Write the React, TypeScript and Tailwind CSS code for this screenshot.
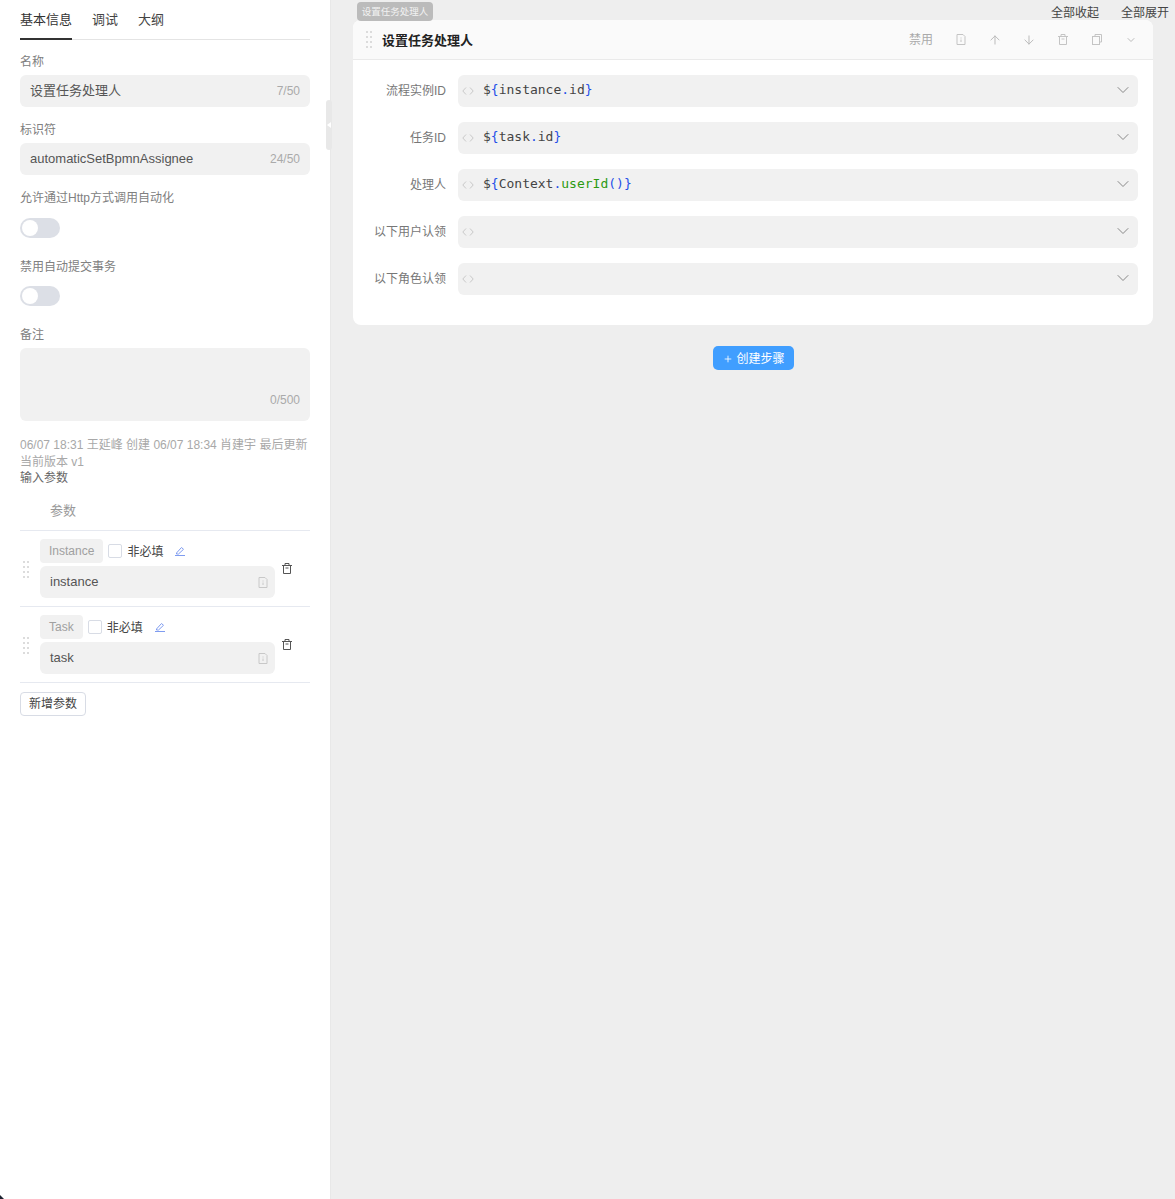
import React from 'react'
import { ChevronDown, ArrowUp, ArrowDown, Plus } from 'lucide-react'

const font = { fontFamily: '"Liberation Sans", "Noto Sans CJK SC", sans-serif' }

const DragDots = () => (
  <svg width="6" height="17" viewBox="0 0 6 17" fill="#dcdcdc" className="shrink-0">
    {[0, 5, 10, 15].map(y => (
      <g key={y}>
        <rect x="0" y={y} width="2" height="2" />
        <rect x="4" y={y} width="2" height="2" />
      </g>
    ))}
  </svg>
)

const FileIcon = ({ color = '#c8c8c8' }: { color?: string }) => (
  <svg width="10" height="11" viewBox="0 0 10 11" fill="none" stroke={color} strokeWidth="1" className="shrink-0">
    <path d="M1 .5h6l2 2v8H1z" />
    <path d="M5 3.500v1M5 5.500v2.500" />
  </svg>
)

const TrashIcon = ({ color }: { color: string }) => (
  <svg width="10" height="11" viewBox="0 0 10 11" fill="none" stroke={color} strokeWidth="1" className="shrink-0">
    <path d="M3 2V.5h4V2M0 2.500h10M1.500 2.500v8h7v-8M3.500 5h3" />
  </svg>
)

const CopyIcon = ({ color }: { color: string }) => (
  <svg width="10" height="11" viewBox="0 0 10 11" fill="none" stroke={color} strokeWidth="1">
    <path d="M3 2.500v-2h6.500v7.500H7.500" />
    <rect x=".5" y="2.500" width="7" height="8" />
  </svg>
)

const PencilIcon = () => (
  <svg width="10" height="10" viewBox="0 0 10 10" fill="none" stroke="#7f9cf0" strokeWidth="1" className="ml-3 shrink-0">
    <path d="M1.500 7 6.500 1.500 8.500 3.300 3.500 8H1.500zM0 9.500h10" />
  </svg>
)

const CodeIcon = () => (
  <svg width="12" height="8" viewBox="0 0 12 8" fill="none" stroke="#c8c8c8" strokeWidth="1" className="shrink-0">
    <path d="M4 .5 .8 4 4 7.500M8 .5 11.200 4 8 7.500" />
  </svg>
)

const Toggle = () => (
  <div className="w-10 h-5 rounded-full bg-[#dcdfe6] p-[2px]">
    <div className="w-4 h-4 rounded-full bg-white" />
  </div>
)

const Field = ({ label, value, count }: { label: string; value: string; count: string }) => (
  <div className="mb-[13px]">
    <div className="h-[18px] leading-[20px] text-xs text-[#808080] mb-[5px]">{label}</div>
    <div className="h-8 rounded-md bg-[#f1f1f1] flex items-center justify-between px-[10px]">
      <span className="text-[13px] text-[#555]">{value}</span>
      <span className="text-xs text-[#aaa]">{count}</span>
    </div>
  </div>
)

const ParamRow = ({ tag, value }: { tag: string; value: string }) => (
  <div className="flex items-center border-b border-[#e6e9f0] h-[76px]">
    <div className="w-5 shrink-0 flex pl-[3px] pt-[1px]">
      <DragDots />
    </div>
    <div className="w-[235px]">
      <div className="flex items-center h-6 mb-[3px]">
        <span className="h-6 px-[9px] rounded bg-[#f1f1f1] text-xs text-[#a0a0a0] leading-6">{tag}</span>
        <span className="ml-[5px] w-[14px] h-[14px] rounded-[2px] border border-[#d8dce5] bg-white" />
        <span className="ml-[5px] pt-[2px] text-xs text-[#444]">非必填</span>
        <PencilIcon />
      </div>
      <div className="h-8 rounded-md bg-[#f1f1f1] flex items-center justify-between pl-[10px] pr-[7px]">
        <span className="text-[13px] text-[#555]">{value}</span>
        <FileIcon />
      </div>
    </div>
    <span className="ml-[7px] flex">
      <TrashIcon color="#555" />
    </span>
  </div>
)

const CodeLine = ({ label, children }: { label: string; children?: React.ReactNode }) => (
  <div className="flex items-center mb-[15px]">
    <div className="w-[105px] pr-3 text-right text-xs text-[#777] shrink-0">{label}</div>
    <div className="flex-1 h-8 rounded-md bg-[#f1f1f1] flex items-center pl-1 pr-[5px]">
      <CodeIcon />
      <span
        className="ml-[9px] pb-[2px] flex-1 text-[13px] text-[#444] whitespace-pre"
        style={{ fontFamily: '"DejaVu Sans Mono", monospace' }}
      >
        {children}
      </span>
      <span className="flex pb-[2px]">
        <ChevronDown size={20} color="#888" strokeWidth={1.2} />
      </span>
    </div>
  </div>
)

const B = ({ children }: { children: React.ReactNode }) => <span className="text-[#1f4fe8]">{children}</span>
const G = ({ children }: { children: React.ReactNode }) => <span className="text-[#2c9a12]">{children}</span>

export default function App() {
  return (
    <div className="flex h-[1199px] overflow-hidden bg-[#eeeeee] relative" style={font}>
      <aside className="w-[331px] shrink-0 bg-white border-r border-[#e8e8e8] px-5 relative">
        <div className="flex gap-5 h-10 border-b border-[#e4e4e4] text-[13px] text-[#444]">
          <div className="h-10 leading-[40px] border-b-2 border-[#333] text-[#333]">基本信息</div>
          <div className="leading-[40px]">调试</div>
          <div className="leading-[40px]">大纲</div>
        </div>

        <div className="pt-3">
          <Field label="名称" value="设置任务处理人" count="7/50" />
          <Field label="标识符" value="automaticSetBpmnAssignee" count="24/50" />

          <div className="h-[18px] leading-[20px] text-xs text-[#808080] mb-3">允许通过Http方式调用自动化</div>
          <Toggle />
          <div className="h-[18px] leading-[20px] text-xs text-[#808080] mt-[19px] mb-[11px]">禁用自动提交事务</div>
          <Toggle />
          <div className="h-[18px] leading-[20px] text-xs text-[#808080] mt-[19px] mb-[5px]">备注</div>
          <div className="h-[73px] rounded-md bg-[#f1f1f1] flex items-end justify-end px-[10px] pb-[14px]">
            <span className="text-xs leading-[14px] text-[#aaa]">0/500</span>
          </div>

          <div className="mt-[16px] text-xs leading-[17px] text-[#a8a8a8]">
            <div>06/07 18:31 王延峰 创建 06/07 18:34 肖建宇 最后更新</div>
            <div>当前版本 v1</div>
          </div>
          <div className="-mt-[1px] text-xs leading-[16px] text-[#666]">输入参数</div>

          <div className="h-[44px] pl-[30px] pt-[4px] flex items-center text-[13px] text-[#999] border-b border-[#e6e9f0] mt-[1px]">参数</div>
          <ParamRow tag="Instance" value="instance" />
          <ParamRow tag="Task" value="task" />
          <button className="mt-[9px] h-6 w-[66px] rounded border border-[#d8dce5] bg-white text-xs text-[#444]">新增参数</button>
        </div>
      </aside>

      <div className="absolute left-[326px] top-[100px] w-[6px] h-[50px] rounded-sm bg-[#e8e8e8] flex items-center justify-center">
        <span className="w-0 h-0 border-y-[3px] border-y-transparent border-r-[4px] border-r-white" />
      </div>

      <main className="flex-1 flex flex-col items-stretch relative">
        <div className="h-5 shrink-0 flex justify-end items-start pt-[5px] gap-[22px] pr-[6px] text-xs text-[#444] leading-[16px]">
          <span>全部收起</span>
          <span>全部展开</span>
        </div>
        <div className="absolute left-[26px] top-[2px] h-[19px] w-[76px] rounded bg-[#bbbbbb] text-[9.5px] leading-[20px] text-center text-[#f2f2f2]">
          设置任务处理人
        </div>

        <section className="mx-[22px] bg-white rounded-lg overflow-hidden">
          <header className="h-10 bg-[#fafafa] border-b border-[#eaeaea] flex items-center pl-[13px] pr-[5px]">
            <DragDots />
            <span className="ml-[10px] pt-[2px] text-[13px] font-bold text-[#222]">设置任务处理人</span>
            <div className="ml-auto flex items-center text-[#bbb]">
              <span className="text-xs text-[#aaa] pt-[1px]">禁用</span>
              <span className="ml-[11px] w-[34px] flex justify-center"><FileIcon color="#c4c4c4" /></span>
              <span className="w-[34px] flex justify-center"><ArrowUp size={14} strokeWidth={1.7} /></span>
              <span className="w-[34px] flex justify-center"><ArrowDown size={14} strokeWidth={1.7} /></span>
              <span className="w-[34px] flex justify-center"><TrashIcon color="#c4c4c4" /></span>
              <span className="w-[34px] flex justify-center"><CopyIcon color="#c4c4c4" /></span>
              <span className="w-[34px] flex justify-center"><ChevronDown size={12} strokeWidth={2} /></span>
            </div>
          </header>
          <div className="pt-[15px] pb-[15px] pr-[15px]">
            <CodeLine label="流程实例ID">
              $<B>{'{'}</B>instance<B>.</B>id<B>{'}'}</B>
            </CodeLine>
            <CodeLine label="任务ID">
              $<B>{'{'}</B>task<B>.</B>id<B>{'}'}</B>
            </CodeLine>
            <CodeLine label="处理人">
              $<B>{'{'}</B>Context<B>.</B><G>userId</G><B>()</B><B>{'}'}</B>
            </CodeLine>
            <CodeLine label="以下用户认领" />
            <CodeLine label="以下角色认领" />
          </div>
        </section>

        <div className="flex justify-center mt-[21px]">
          <button className="h-6 w-[81px] rounded-[5px] bg-[#409eff] text-xs text-white flex items-center justify-center gap-[3px] pl-[2px] pt-[1px]">
            <Plus size={10} />
            创建步骤
          </button>
        </div>
      </main>

      <svg width="4" height="4" viewBox="0 0 4 4" className="absolute left-0 bottom-0" fill="#1c2230">
        <path d="M0 0 4 4H0z" />
      </svg>
    </div>
  )
}
